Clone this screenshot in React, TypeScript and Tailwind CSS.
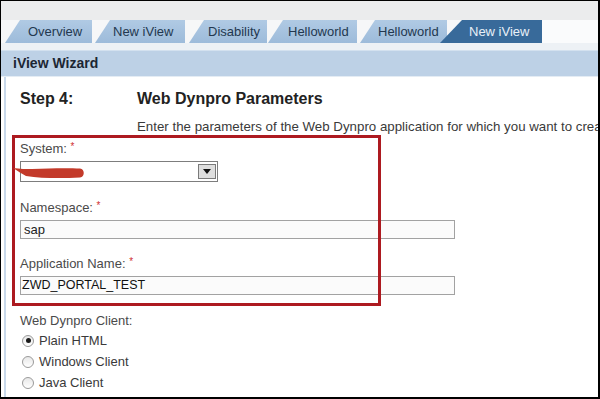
import React from "react";

const tabs = [
  { label: "Overview", w: 87, ml: 4, pl: 23 },
  { label: "New iView", w: 90, ml: 3, pl: 18 },
  { label: "Disability", w: 78, ml: 4, pl: 19 },
  { label: "Helloworld", w: 89, ml: 1, pl: 20 },
  { label: "Helloworld", w: 87, ml: 3, pl: 18 },
];

function Label({ text }: { text: string }) {
  return (
    <div className="h-[16px] leading-[16px] text-[13px] text-[#4a4a4a]">
      {text} <span className="text-[10px] text-[#d03030] align-top leading-[12px]">*</span>
    </div>
  );
}

function Radio({ label, checked }: { label: string; checked?: boolean }) {
  return (
    <div className="h-[21px] flex items-center">
      <div className="ml-[2px] w-[12px] h-[12px] shrink-0 rounded-full border border-[#9a9a9a] bg-gradient-to-b from-[#e8e8e8] to-white flex items-center justify-center">
        {checked && <div className="w-[5px] h-[5px] rounded-full bg-[#1a1a1a]" />}
      </div>
      <span className="ml-[5px] text-[13px] text-[#3a3a3a] leading-[16px]">{label}</span>
    </div>
  );
}

export default function App() {
  return (
    <div
      className="relative w-[600px] h-[399px] overflow-hidden bg-white border-t border-l border-r-2 border-b-2 border-black flex flex-col"
      style={{ fontFamily: '"Liberation Sans", Arial, sans-serif' }}
    >
      {/* top band */}
      <div className="h-[19px] shrink-0 bg-[#ebeced]" />
      {/* tab row */}
      <div className="h-[23px] shrink-0 bg-[#f6f7f8] flex items-stretch">
        {tabs.map((t, i) => (
          <div
            key={i}
            className="h-full shrink-0 bg-gradient-to-b from-[#b0cae4] to-[#9dbbda] [clip-path:polygon(15px_0,100%_0,100%_100%,0_100%)] flex items-center text-[13px] text-[#23384f] whitespace-nowrap"
            style={{ width: t.w, marginLeft: t.ml, paddingLeft: t.pl }}
          >
            {t.label}
          </div>
        ))}
        <div className="h-full shrink-0 w-[102px] -ml-[7px] bg-[#386a9a] [clip-path:polygon(22px_0,100%_0,100%_100%,0_100%)] flex items-center pl-[29px] text-[13px] text-[#e8f0f8] whitespace-nowrap">
          New iView
        </div>
        <div className="flex-1 bg-[#fafbfc]" />
      </div>
      {/* strip */}
      <div className="h-[7px] shrink-0 bg-[#edf1f5]" />
      {/* header */}
      <div className="h-[26px] shrink-0 bg-[#bdd1e6] border-t border-[#d3e1ef] flex items-center pl-[12px] text-[14px] font-bold text-[#1c2633]">
        iView Wizard
      </div>
      <div className="h-px shrink-0 bg-[#e4ecf4]" />
      {/* content */}
      <div className="flex-1 min-h-0 flex bg-white">
        <div className="w-[3px] shrink-0" />
        <div className="w-[2px] shrink-0 bg-[#c8d8ea]" />
        <div className="flex-1 min-w-0 overflow-hidden pl-[14px] flex flex-col">
          <div className="mt-[13px] h-[18px] flex items-center text-[16px] font-bold text-[#222]">
            <div className="w-[117px] shrink-0">Step 4:</div>
            <div>Web Dynpro Parameters</div>
          </div>
          <div className="mt-[11px] ml-[117px] h-[16px] leading-[16px] text-[13.3px] text-[#3a3a3a] whitespace-nowrap overflow-hidden">
            Enter the parameters of the Web Dynpro application for which you want to crea
          </div>
          <div className="mt-[6px]">
            <Label text="System:" />
          </div>
          <div className="mt-[4px] w-[198px] h-[21px] border border-[#7d7d7d] bg-white flex items-center justify-end pr-[1px]">
            <div className="w-[18px] h-[15px] bg-[#dedede] border border-[#7a7a7a] flex items-center justify-center">
              <svg width="8" height="5" viewBox="0 0 8 5">
                <path d="M0 0 H8 L4 5 Z" fill="#111" />
              </svg>
            </div>
          </div>
          <div className="mt-[18px]">
            <Label text="Namespace:" />
          </div>
          <div className="mt-[4px] w-[435px] h-[19px] border border-[#a2a2a2] bg-[#fbfbfb] flex items-center pl-[3px] text-[13px] text-[#222]">
            sap
          </div>
          <div className="mt-[17px]">
            <Label text="Application Name:" />
          </div>
          <div className="mt-[4px] w-[435px] h-[19px] border border-[#a2a2a2] bg-[#fbfbfb] flex items-center pl-[1px] text-[12.5px] text-[#111]">
            ZWD_PORTAL_TEST
          </div>
          <div className="mt-[18px] h-[16px] leading-[16px] text-[13px] text-[#4a4a4a]">Web Dynpro Client:</div>
          <div className="mt-[1px] flex flex-col">
            <Radio label="Plain HTML" checked />
            <Radio label="Windows Client" />
            <Radio label="Java Client" />
          </div>
        </div>
      </div>

      {/* red annotation box */}
      <div className="absolute left-[11px] top-[134px] w-[369px] h-[171px] border-[3px] border-[#ad1a20]" />
      {/* red scribble */}
      <svg className="absolute left-[11px] top-[165px]" width="74" height="15" viewBox="0 0 74 15">
        <path
          d="M1 2 C 8 3, 14 3, 20 3 C 40 2, 58 2, 68 2.5 C 73 3, 73 11, 68 11.5 C 50 12.5, 30 12.5, 14 10 C 10 8, 6 5, 1 2 Z"
          fill="#c33a2a"
        />
      </svg>
    </div>
  );
}
